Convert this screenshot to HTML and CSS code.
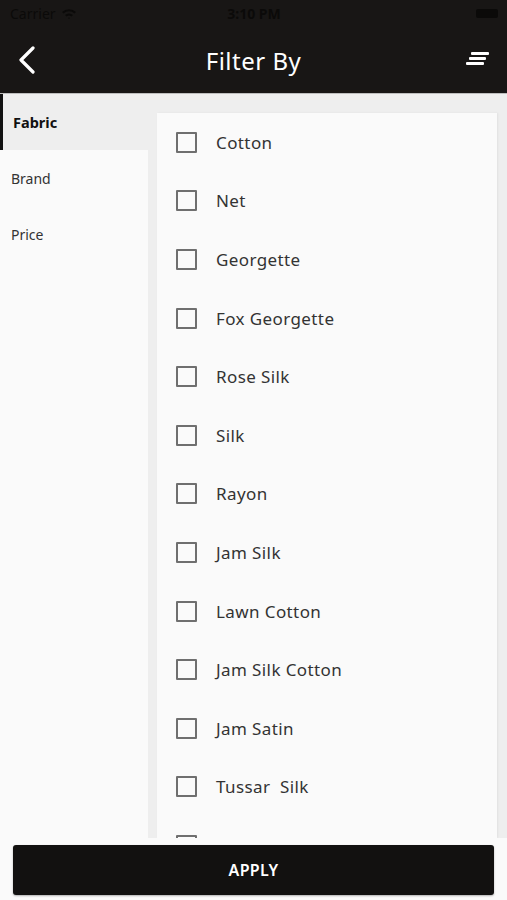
FILE: index.html
```html
<!DOCTYPE html>
<html lang="en">
<head>
    <meta charset="UTF-8">
    <meta name="viewport" content="width=device-width, initial-scale=1.0">
    <title>Filter By</title>
    <link rel="stylesheet" href="styles.css">
</head>
<body>
    <div class="screen">
        <div class="header">
            <div class="status-bar">
                <span class="carrier">Carrier
                    <svg width="16" height="12" viewBox="0 0 16 12"><path d="M1 4 A10 10 0 0 1 15 4 L13.5 5.5 A8 8 0 0 0 2.5 5.5 Z M4 7 A6 6 0 0 1 12 7 L10.5 8.5 A4 4 0 0 0 5.5 8.5 Z M7 10 L8 11 L9 10 A1.5 1.5 0 0 0 7 10 Z" fill="#0b0a09"/></svg>
                </span>
                <span class="time">3:10 PM</span>
                <span class="battery"><span class="battery-fill"></span></span>
            </div>
            <div class="nav-bar">
                <!-- Voltar -->
                <svg class="back" width="20" height="28" viewBox="0 0 20 28">
                    <polyline points="15,2 3,14 15,26" fill="none" stroke="#fff" stroke-width="3.2" stroke-linecap="round" stroke-linejoin="round"/>
                </svg>
                <div class="title">Filter By</div>
                <svg class="menu" width="26" height="16" viewBox="0 0 26 16">
                    <rect x="6" y="1" width="18" height="3" rx="1" fill="#fff"/>
                    <rect x="4" y="6" width="17" height="3" rx="1" fill="#fff"/>
                    <rect x="1" y="11" width="18" height="3" rx="1" fill="#fff"/>
                </svg>
            </div>
        </div>

        <div class="content">
            <div class="sidebar">
                <div class="tab active">Fabric</div>
                <div class="tab">Brand</div>
                <div class="tab">Price</div>
            </div>
            <div class="options">
                <div class="option"><span class="check"></span>Cotton</div>
                <div class="option"><span class="check"></span>Net</div>
                <div class="option"><span class="check"></span>Georgette</div>
                <div class="option"><span class="check"></span>Fox Georgette</div>
                <div class="option"><span class="check"></span>Rose Silk</div>
                <div class="option"><span class="check"></span>Silk</div>
                <div class="option"><span class="check"></span>Rayon</div>
                <div class="option"><span class="check"></span>Jam Silk</div>
                <div class="option"><span class="check"></span>Lawn Cotton</div>
                <div class="option"><span class="check"></span>Jam Silk Cotton</div>
                <div class="option"><span class="check"></span>Jam Satin</div>
                <div class="option"><span class="check"></span>Tussar&nbsp; Silk</div>
                <div class="option"><span class="check"></span></div>
            </div>
        </div>

        <div class="footer">
            <button class="apply">APPLY</button>
        </div>
    </div>
</body>
</html>
```

FILE: styles.css
```css
body {
    font-family: "Noto Sans", sans-serif;
    margin: 0;
    padding: 0;
    background-color: #fafafa;
    color: #333;
}

.screen {
    display: flex;
    flex-direction: column;
    height: 900px;
    overflow: hidden;
}

.header {
    background-color: #181615;
    height: 93px;
    border-bottom: 1px solid #bdbdbd;
    display: flex;
    flex-direction: column;
}

.status-bar {
    display: flex;
    justify-content: space-between;
    align-items: center;
    height: 27px;
    padding: 0 9px 0 10px;
    font-size: 14px;
    color: #0b0a09;
}

.carrier {
    display: flex;
    align-items: center;
    gap: 5px;
    width: 90px;
}

.time {
    font-weight: bold;
}

.battery {
    width: 90px;
    display: flex;
    justify-content: flex-end;
}

.battery-fill {
    width: 22px;
    height: 9px;
    border-radius: 2px;
    background-color: #0b0a09;
}

.nav-bar {
    flex: 1;
    display: flex;
    align-items: center;
    justify-content: space-between;
    padding: 0 16px 0 18px;
}

.title {
    color: #fff;
    font-size: 24px;
    font-weight: normal;
    letter-spacing: 0.5px;
    margin-left: 4px;
}

.menu {
    margin-top: -3px;
}

.content {
    flex: 1;
    display: flex;
    background-color: #eeeeee;
    min-height: 0;
}

.sidebar {
    width: 148px;
    background-color: #fafafa;
    margin-right: 9px;
}

.tab {
    height: 56px;
    display: flex;
    align-items: center;
    padding-left: 11px;
    font-size: 14px;
    color: #333;
}

.tab.active {
    background-color: #eeeeee;
    border-left: 3px solid #111;
    padding-left: 10px;
    font-weight: bold;
    font-size: 14.5px;
    color: #111;
}

.options {
    flex: 1;
    margin: 19px 10px 0 0;
    background-color: #fafafa;
    box-shadow: 1px 0 2px rgba(0, 0, 0, 0.06);
    overflow: hidden;
}

.option {
    height: 58.6px;
    display: flex;
    align-items: center;
    padding-left: 19px;
    font-size: 17px;
    letter-spacing: 0.4px;
    color: #333;
}

.check {
    width: 17px;
    height: 17px;
    border: 2px solid #6f6f6f;
    border-radius: 1px;
    margin-right: 19px;
    flex-shrink: 0;
}

.footer {
    height: 62px;
    background-color: #fafafa;
    padding: 7px 13px 5px 13px;
    box-sizing: border-box;
}

.apply {
    width: 481px;
    height: 50px;
    border: none;
    border-radius: 3px;
    background-color: #121110;
    color: #fff;
    font-family: "Noto Sans", sans-serif;
    font-size: 16px;
    font-weight: 600;
    letter-spacing: 0.3px;
    box-shadow: 0 1px 2px rgba(0, 0, 0, 0.3);
}
```
